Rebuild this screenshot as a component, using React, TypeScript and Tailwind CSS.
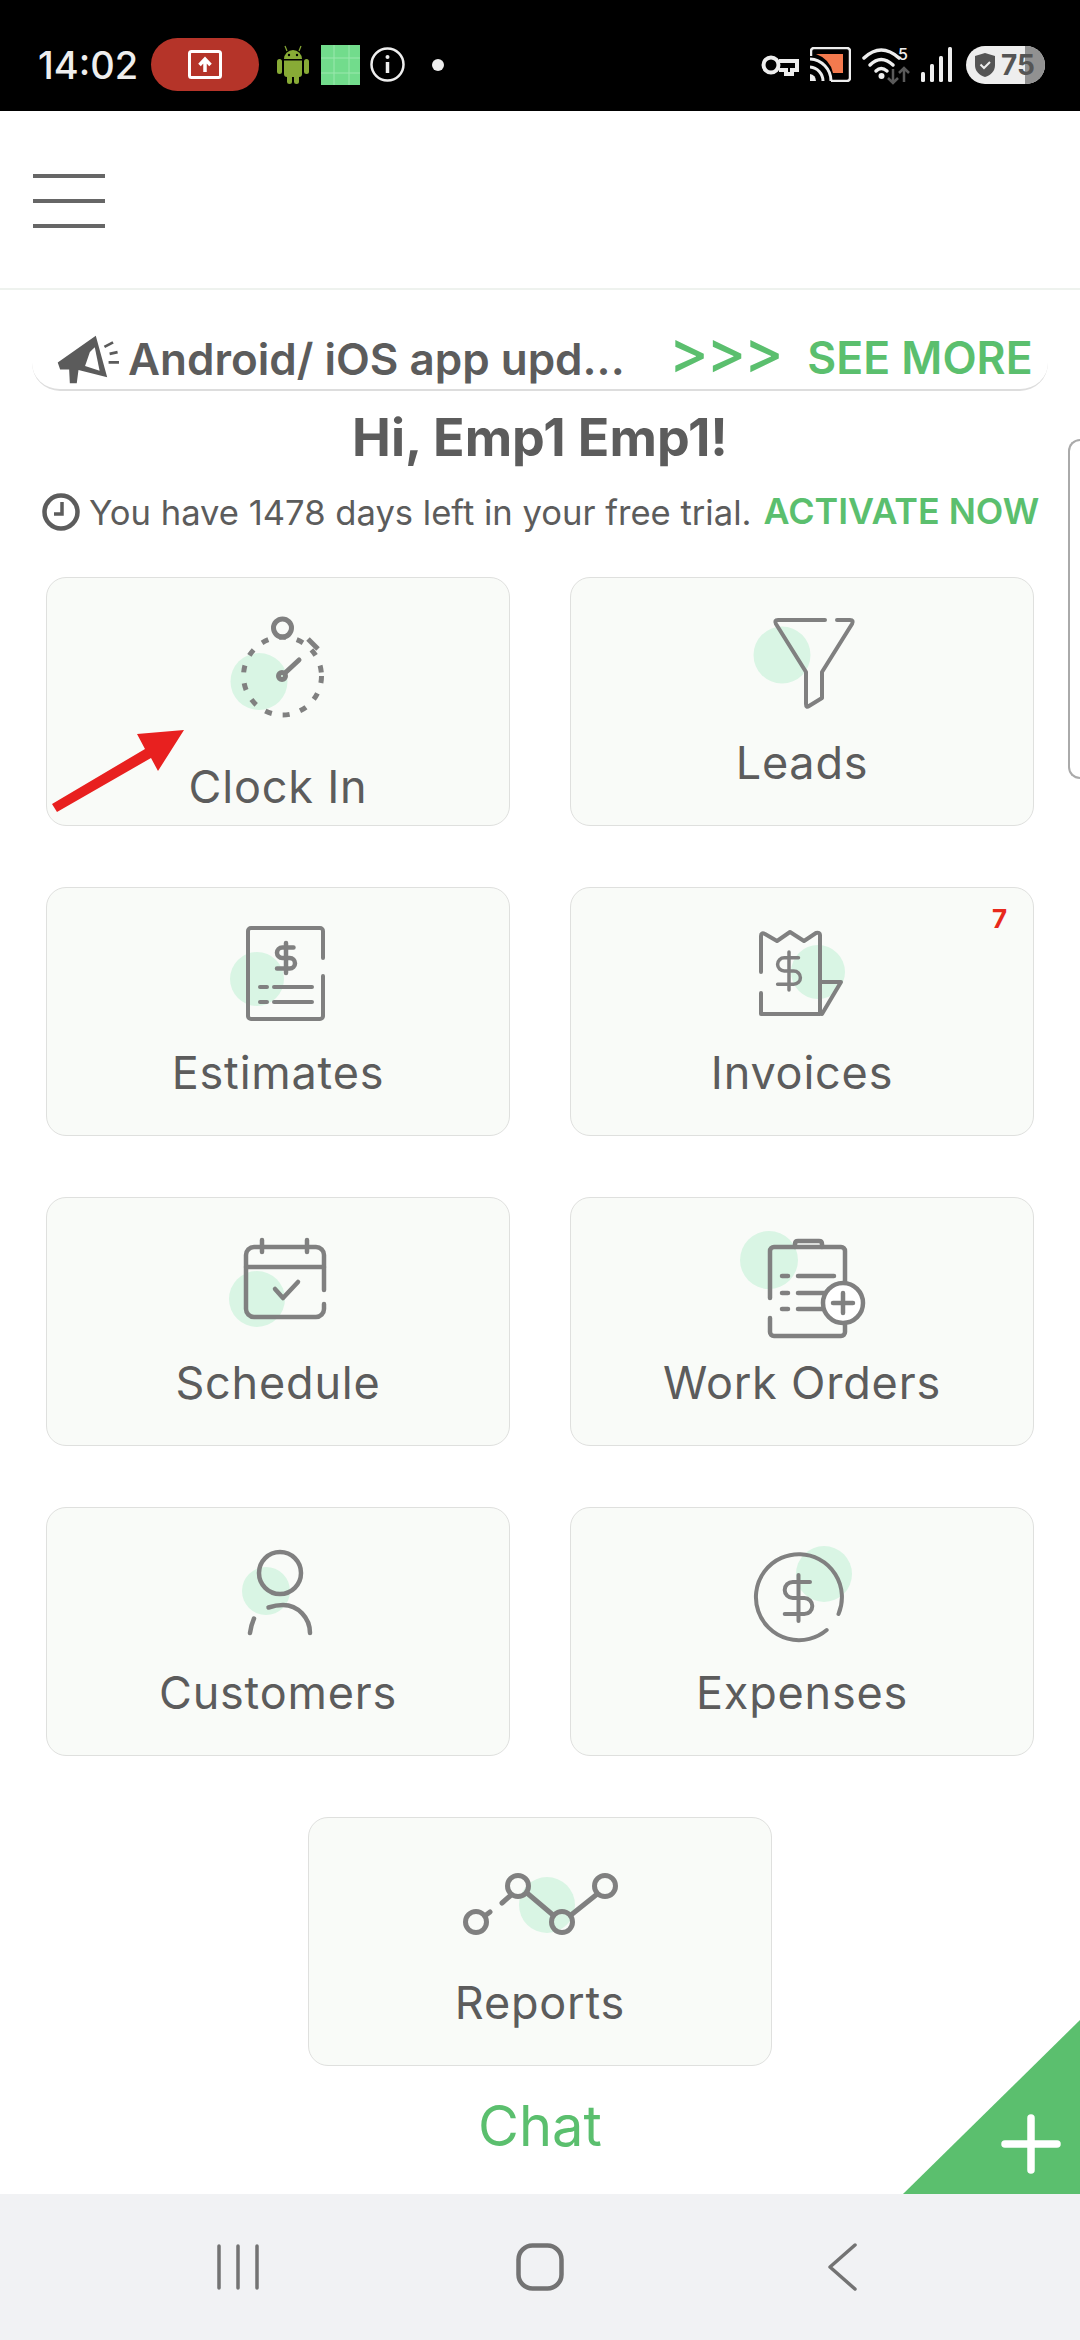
import React from "react";

const INK = "#808080";
const MINT = "#d9f5e4";

// stroke defaults shared by the tile icons
const lineProps = {
  fill: "none",
  stroke: INK,
  strokeWidth: 4,
  strokeLinecap: "round" as const,
  strokeLinejoin: "round" as const,
};

function Dollar({ cx, cy, h, sw }: { cx: number; cy: number; h: number; sw: number }) {
  const s = h / 20;
  return (
    <g transform={`translate(${cx - 12 * s} ${cy - 12 * s}) scale(${s})`} strokeWidth={sw / s}>
      <path d="M12 2v20" />
      <path d="M17 5H9.5a3.5 3.5 0 0 0 0 7h5a3.5 3.5 0 0 1 0 7H6" />
    </g>
  );
}

function ClockInIcon() {
  return (
    <svg width="200" height="144" viewBox="0 0 200 144">
      <circle cx="81" cy="74.5" r="28.5" fill={MINT} />
      <g {...lineProps}>
        <circle cx="104.5" cy="69" r="39" strokeDasharray="7 11" strokeLinecap="butt" strokeWidth="5" />
        <circle cx="104.5" cy="21" r="9" strokeWidth="5" />
        <path d="M130 32l10 10" strokeWidth="5" strokeLinecap="butt" />
        <circle cx="104" cy="69" r="3.5" strokeWidth="5" />
        <path d="M107 66l14-13" strokeWidth="5" />
      </g>
    </svg>
  );
}

function LeadsIcon() {
  return (
    <svg width="200" height="120" viewBox="0 0 200 120">
      <circle cx="80" cy="48" r="28.5" fill={MINT} />
      <path {...lineProps} d="M123 13H76q-4 0-2 4l30 48v32q0 4 3 2l13-8V65l30-48q2-4-2-4h-13" />
    </svg>
  );
}

function EstimatesIcon() {
  return (
    <svg width="200" height="120" viewBox="0 0 200 120">
      <circle cx="79" cy="62" r="27" fill={MINT} />
      <g {...lineProps}>
        <path d="M145 41V14a3 3 0 0 0-3-3H73a3 3 0 0 0-3 3v85a3 3 0 0 0 3 3h69a3 3 0 0 0 3-3V59" />
        <Dollar cx={108} cy={41} h={30} sw={4.500} />
        <path d="M82 70h7M96 70h38M82 85h7M96 85h38" />
      </g>
    </svg>
  );
}

function InvoicesIcon() {
  return (
    <svg width="200" height="120" viewBox="0 0 200 120">
      <circle cx="116" cy="55" r="27" fill={MINT} />
      <g {...lineProps}>
        <path d="M59 55V19q0-4 4-2l12 7 13-9 14 9 12-8q4-1 4 2v79H59V76" />
        <path d="M118 65h21l-19 32" />
        <Dollar cx={87} cy={54} h={38} sw={3.500} />
      </g>
    </svg>
  );
}

function ScheduleIcon() {
  return (
    <svg width="200" height="120" viewBox="0 0 200 120">
      <circle cx="79" cy="72" r="28" fill={MINT} />
      <g {...lineProps} strokeWidth="4.500">
        <path d="M146 63V28a8 8 0 0 0-8-8H76a8 8 0 0 0-8 8v54a8 8 0 0 0 8 8h62a8 8 0 0 0 8-8v-5" />
        <path d="M68 40h78M84 13v12M129 13v12" />
        <path d="M97 62l8 9 15-16" />
      </g>
    </svg>
  );
}

function WorkOrdersIcon() {
  return (
    <svg width="200" height="120" viewBox="0 0 200 120">
      <circle cx="67" cy="33" r="29" fill={MINT} />
      <g {...lineProps} strokeWidth="4.500">
        <path d="M143 55V24a4 4 0 0 0-4-4H72a4 4 0 0 0-4 4v47M68 91v14a4 4 0 0 0 4 4h67a4 4 0 0 0 4-4v-7" />
        <path d="M93 20v-3q0-3 3-3h21q3 0 3 3v3" />
        <path d="M80 49h6M96 49h36M80 66h6M96 66h26M80 82h6M96 82h26" />
        <circle cx="141" cy="76" r="20" fill="#ffffff" />
        <path d="M131 76h20M141 66v20" />
      </g>
    </svg>
  );
}

function CustomersIcon() {
  return (
    <svg width="200" height="120" viewBox="0 0 200 120">
      <circle cx="88" cy="54" r="24" fill={MINT} />
      <g {...lineProps} strokeWidth="4.500">
        <circle cx="102" cy="36" r="21" />
        <path d="M90.500 70.500C95 69 100 68 105 68c15 0 27 13 27 28" />
        <path d="M76 81.500q-3 7-4 14.500" />
      </g>
    </svg>
  );
}

function ExpensesIcon() {
  return (
    <svg width="200" height="120" viewBox="0 0 200 120">
      <circle cx="122" cy="37" r="28" fill={MINT} />
      <g {...lineProps}>
        <path d="M136.500 77A43 43 0 1 0 124.700 93" />
        <Dollar cx={96.500} cy={61} h={46} sw={4} />
      </g>
    </svg>
  );
}

function ReportsIcon() {
  return (
    <svg width="200" height="120" viewBox="0 0 200 120">
      <circle cx="107" cy="58" r="28" fill={MINT} />
      <g {...lineProps} strokeWidth="5">
        <circle cx="36" cy="75" r="10.500" />
        <circle cx="78" cy="39" r="10.500" />
        <circle cx="122" cy="75" r="10.500" />
        <circle cx="165" cy="39" r="10.500" />
        <path d="M46 68l4-3M62 56l8-7M87 46l26 22M131 68l25-20" />
      </g>
    </svg>
  );
}

function Tile({
  label,
  icon,
  badge,
  children,
}: {
  label: string;
  icon: React.ReactNode;
  badge?: string;
  children?: React.ReactNode;
}) {
  return (
    <div className="relative flex h-[249px] w-[464px] flex-col items-center rounded-[20px] border-[1.5px] border-[#dfe0de] bg-[#f9fbf8] pt-[28.5px]">
      {icon}
      <span className="mt-[13px] text-[45px] leading-none tracking-[0.8px] text-[#5c5c5c]">{label}</span>
      {badge && (
        <span className="absolute right-[26px] top-[18px] text-[26px] font-bold leading-none text-[#e8291c]">
          {badge}
        </span>
      )}
      {children}
    </div>
  );
}

function AndroidIcon() {
  return (
    <svg className="ml-[18px]" width="32" height="39" viewBox="0 0 32 39" fill="#88ab36">
      <path d="M7 14a9 9 0 0 1 18 0z" />
      <path d="M10 6L8 1M22 6l2-5" stroke="#88ab36" strokeWidth="1.200" />
      <circle cx="12" cy="10" r="1.200" fill="#000000" />
      <circle cx="20" cy="10" r="1.200" fill="#000000" />
      <path d="M7 15.500h18V29a3 3 0 0 1-3 3H10a3 3 0 0 1-3-3z" />
      <rect x="0" y="14" width="5" height="15" rx="2.500" />
      <rect x="27" y="14" width="5" height="15" rx="2.500" />
      <rect x="10" y="28" width="5" height="11" rx="2.500" />
      <rect x="17" y="28" width="5" height="11" rx="2.500" />
    </svg>
  );
}

function StatusBar() {
  return (
    <div className="flex h-[111px] shrink-0 items-center justify-between bg-black pl-[38px] pr-[35px] pt-[18px] text-[#eeeeee]">
      <div className="flex items-center">
        <span className="text-[38px] font-medium leading-none">14:02</span>
        <div className="ml-[13px] flex h-[53px] w-[108px] items-center justify-center rounded-full bg-[#b53429]">
          <svg width="34" height="29" viewBox="0 0 34 29" fill="none" stroke="#ffffff">
            <rect x="1.500" y="1.500" width="31" height="26" rx="2" strokeWidth="3" />
            <path d="M17 22V10M11.500 15l5.500-6 5.500 6" strokeWidth="3.500" />
          </svg>
        </div>
        <AndroidIcon />
        <svg className="ml-[12px]" width="39" height="40" viewBox="0 0 39 40">
          <rect width="39" height="40" fill="#72dc8c" />
          <path d="M13 0v40M28 0v40M0 13h39M0 28h39" stroke="#9be8ae" strokeWidth="1" />
        </svg>
        <svg className="ml-[10px]" width="35" height="35" viewBox="0 0 35 35" fill="none" stroke="#eeeeee">
          <circle cx="17.500" cy="17.500" r="16" strokeWidth="2.500" />
          <path d="M17.500 15v11" strokeWidth="3.500" />
          <circle cx="17.500" cy="10" r="2" fill="#eeeeee" stroke="none" />
        </svg>
        <div className="ml-[27px] h-[12px] w-[12px] rounded-full bg-[#eeeeee]" />
      </div>
      <div className="flex items-center">
        <svg width="38" height="22" viewBox="0 0 38 22" fill="none" stroke="#eeeeee" strokeWidth="4">
          <circle cx="10" cy="11" r="7.500" />
          <path d="M18 7h18v9h-5v4h-6v-4h-7" />
        </svg>
        <svg className="ml-[11px]" width="41" height="35" viewBox="0 0 41 35" fill="none">
          <path d="M6 7h27v19H23Q20 12 6 7z" fill="#f47a4e" />
          <path d="M1 9V4a3 3 0 0 1 3-3h33a3 3 0 0 1 3 3v27a3 3 0 0 1-3 3H21" stroke="#eeeeee" strokeWidth="2.500" />
          <path d="M0 12a22 22 0 0 1 21 22M0 20a14 14 0 0 1 13 14" stroke="#eeeeee" strokeWidth="3" />
          <path d="M0 27a7 7 0 0 1 6 7H0z" fill="#eeeeee" />
        </svg>
        <svg className="ml-[11px]" width="48" height="40" viewBox="0 0 48 40" fill="none">
          <g stroke="#eeeeee" strokeWidth="3.500" strokeLinecap="round">
            <path d="M2 13Q19-3 37 13" />
            <path d="M8 20Q19 9 31 20" />
            <path d="M14 26q5-5 11 0" />
          </g>
          <circle cx="19.500" cy="31" r="3" fill="#eeeeee" />
          <path d="M31 24v14M26 33l5 5 5-5M42 37V23M37 28l5-5 5 5" stroke="#5a5a5a" strokeWidth="2.500" />
          <text x="36" y="15" fill="#eeeeee" fontSize="16" fontWeight="500">5</text>
        </svg>
        <svg className="ml-[11px]" width="31" height="35" viewBox="0 0 31 35" fill="#eeeeee">
          <rect x="0" y="25" width="4" height="10" rx="1.500" />
          <rect x="9" y="17" width="4" height="18" rx="1.500" />
          <rect x="18" y="9" width="4" height="26" rx="1.500" />
          <rect x="27" y="0" width="4" height="35" rx="1.500" />
        </svg>
        <div className="relative ml-[14px] flex h-[38px] w-[79px] items-center overflow-hidden rounded-full bg-[#eeeeee] pl-[9px]">
          <div className="absolute inset-y-0 right-0 w-[20px] bg-[#919191]" />
          <svg className="relative" width="20" height="24" viewBox="0 0 20 24">
            <path d="M10 0l10 3v9c0 6-4 10-10 12C4 22 0 18 0 12V3z" fill="#555555" />
            <path d="M5.500 11.500l3.500 3.500 6-6" fill="none" stroke="#eeeeee" strokeWidth="2" />
          </svg>
          <span className="relative ml-[6px] text-[28px] font-bold leading-none text-[#555555]">75</span>
        </div>
      </div>
    </div>
  );
}

function NavBar() {
  return (
    <div className="grid h-[146px] shrink-0 grid-cols-3 items-center bg-[#f1f2f4] px-[87px]">
      <svg className="justify-self-center" width="42" height="46" viewBox="0 0 42 46" stroke="#737373" strokeWidth="3.500" strokeLinecap="round">
        <path d="M2 2v42M21 2v42M40 2v42" />
      </svg>
      <svg className="justify-self-center" width="48" height="48" viewBox="0 0 48 48" fill="none" stroke="#737373" strokeWidth="4.500">
        <rect x="2.500" y="2.500" width="43" height="43" rx="14" />
      </svg>
      <svg className="justify-self-center" width="30" height="48" viewBox="0 0 30 48" fill="none" stroke="#737373" strokeWidth="3.500" strokeLinecap="round" strokeLinejoin="round">
        <path d="M28 2L3 24l25 22" />
      </svg>
    </div>
  );
}

export default function App() {
  return (
    <div className="relative flex h-[2340px] w-[1080px] flex-col overflow-hidden bg-white [font-family:Inter,sans-serif]">
      <StatusBar />

      {/* Top bar */}
      <div className="flex h-[179px] shrink-0 items-center border-b-2 border-[#eef2ee] pl-[33px] pt-[3px]">
        <div className="flex w-[72px] flex-col gap-[21px]">
          <div className="h-[4px] bg-[#666666]" />
          <div className="h-[4px] bg-[#666666]" />
          <div className="h-[4px] bg-[#666666]" />
        </div>
      </div>

      <main className="relative flex-1">
        {/* Announcement */}
        <div className="mx-[32px] flex h-[101px] items-center rounded-b-[28px] border-b-2 border-[#dddddd] pl-[24px] pt-[38px]">
          <svg className="mr-[8px] shrink-0" width="64" height="52" viewBox="160 100 185 150">
            <path d="M165 185L275 108l33 120-83-21-5 38h-20l-2-40-26 0z" fill="#5b5b5b" />
            <path d="M258 155l-14 40 42 14-14-68z" fill="#ffffff" />
            <path d="M300 140l25-13M315 160l23-5M312 185h30" stroke="#5b5b5b" strokeWidth="8" />
          </svg>
          <span className="text-[44px] font-semibold leading-none text-[#5c5c5c]">Android/ iOS app upd...</span>
          <span className="ml-[44px] -translate-y-[8px] text-[60px] font-medium leading-none tracking-[-2.5px] text-[#5bbf6e]">&gt;&gt;&gt;</span>
          <span className="ml-[26px] text-[44.5px] font-semibold leading-none text-[#5bbf6e]">SEE MORE</span>
        </div>

        <h1 className="flex h-[94px] items-center justify-center text-[52px] font-bold leading-none text-[#5c5c5c]">
          Hi, Emp1 Emp1!
        </h1>

        <div className="flex h-[54px] items-center pl-[42px]">
          <svg className="shrink-0" width="38" height="38" viewBox="0 0 38 38" fill="none" stroke="#5c5c5c">
            <circle cx="19" cy="19" r="16.500" strokeWidth="4.500" />
            <path d="M20 9v12h-8" strokeWidth="3.500" />
          </svg>
          <span className="ml-[9px] text-[34.6px] leading-none text-[#5c5c5c]">You have 1478 days left in your free trial.</span>
          <span className="ml-[12px] text-[35.8px] font-semibold leading-none text-[#5bbf6e]">ACTIVATE NOW</span>
        </div>

        <div className="mt-[38px] grid grid-cols-2 gap-x-[60px] gap-y-[61px] px-[46px]">
          <Tile label="Clock In" icon={<ClockInIcon />}>
            {/* red annotation arrow */}
            <svg className="absolute left-0 top-0" width="200" height="249" viewBox="0 0 200 249">
              <path d="M137 152L90 156l8 15-93 55 5 8 94-54 7 13z" fill="#e8201f" />
            </svg>
          </Tile>
          <Tile label="Leads" icon={<LeadsIcon />} />
          <Tile label="Estimates" icon={<EstimatesIcon />} />
          <Tile label="Invoices" icon={<InvoicesIcon />} badge="7" />
          <Tile label="Schedule" icon={<ScheduleIcon />} />
          <Tile label="Work Orders" icon={<WorkOrdersIcon />} />
          <Tile label="Customers" icon={<CustomersIcon />} />
          <Tile label="Expenses" icon={<ExpensesIcon />} />
          <div className="col-span-2 justify-self-center">
            <Tile label="Reports" icon={<ReportsIcon />} />
          </div>
        </div>

        <div className="mt-[30px] text-center text-[56px] leading-[60px] text-[#5bbf6e]">Chat</div>

        {/* scroll handle peeking in from the edge */}
        <div className="absolute right-0 top-[149px] h-[340px] w-[12px] rounded-l-[14px] border-2 border-r-0 border-[#aaaaaa] bg-white" />

        {/* quick add corner */}
        <svg className="absolute bottom-0 right-0" width="177" height="174" viewBox="0 0 177 174">
          <path d="M177 0v174H0z" fill="#5bbf6e" />
          <path d="M102 124h52M128 98v52" stroke="#ffffff" strokeWidth="7.500" strokeLinecap="round" />
        </svg>
      </main>

      <NavBar />
    </div>
  );
}
